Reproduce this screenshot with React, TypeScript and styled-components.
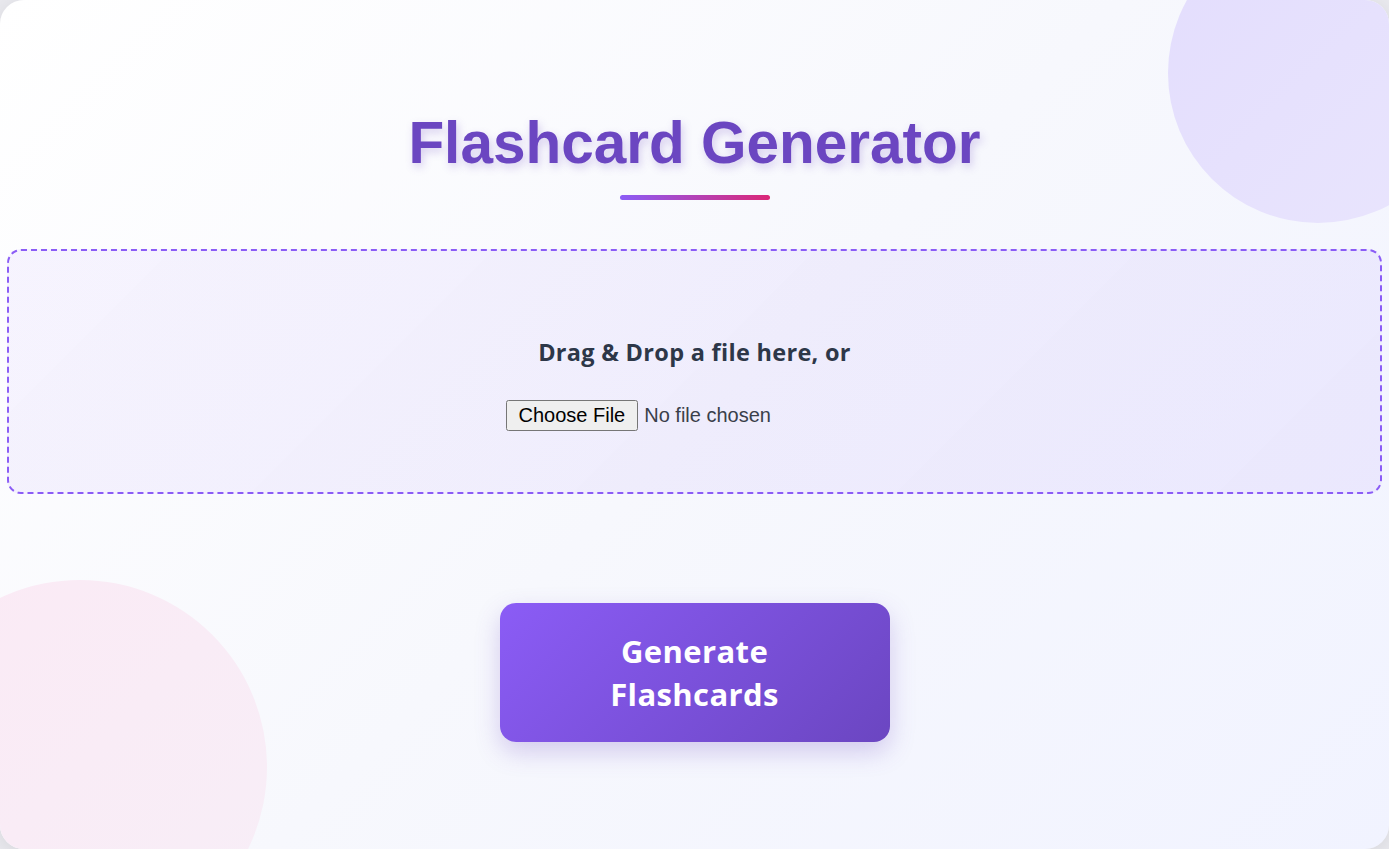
import React from "react";
import styled, { createGlobalStyle } from "styled-components";

const Global = createGlobalStyle`
  html, body { margin: 0; padding: 0; }
  body {
    background: #e9e9ee;
    font-family: "Open Sans", "Liberation Sans", sans-serif;
  }
  * { box-sizing: border-box; }
`;

const Card = styled.div`
  position: relative;
  overflow: hidden;
  min-height: 100vh;
  border-radius: 24px;
  background: linear-gradient(135deg, #ffffff 0%, #f7f8fd 50%, #f1f3ff 100%);
  box-shadow: 0 4px 20px rgba(0, 0, 0, 0.08);
  padding: 103px 7px 0;
  display: flex;
  flex-direction: column;
  align-items: center;
`;

const Blob = styled.div<{ $variant: "violet" | "pink" }>`
  position: absolute;
  border-radius: 50%;
  pointer-events: none;
  ${({ $variant }) =>
    $variant === "violet"
      ? `
    width: 300px; height: 300px; top: -77px; right: -79px;
    background: linear-gradient(135deg, #e3ddfd 0%, #e9e5fd 100%);
  `
      : `
    width: 374px; height: 374px; top: 580px; left: -107px;
    background: linear-gradient(135deg, #fbeaf5 0%, #f7eef7 100%);
  `}
`;

const Title = styled.h1`
  position: relative;
  margin: 0;
  font-family: "Liberation Sans", Arial, sans-serif;
  font-weight: 700;
  font-size: 58.5px;
  line-height: 80px;
  color: #6b46c1;
  text-shadow: 2px 4px 8px rgba(107, 70, 193, 0.25);
`;

const Underline = styled.div`
  position: relative;
  width: 150px;
  height: 5px;
  margin-top: 12px;
  border-radius: 3px;
  background: linear-gradient(90deg, #8b5cf6 0%, #db2777 100%);
`;

const DropZone = styled.div`
  position: relative;
  align-self: stretch;
  margin-top: 49px;
  height: 245px;
  border: 2px dashed #8b5cf6;
  border-radius: 14px;
  background: linear-gradient(135deg, rgba(139, 92, 246, 0.06) 0%, rgba(139, 92, 246, 0.08) 100%);
  display: flex;
  flex-direction: column;
  align-items: center;
  padding-top: 85px;
`;

const DropText = styled.p`
  margin: 0;
  font-family: "Open Sans", sans-serif;
  font-weight: 700;
  font-size: 23.5px;
  letter-spacing: 0.3px;
  line-height: 32px;
  color: #2d3748;
`;

const FileInput = styled.input`
  margin-top: 32px;
  font-family: "Liberation Sans", Arial, sans-serif;
  font-size: 20px;
  color: #3a3f4a;
  width: 378px;

  &::file-selector-button {
    font: inherit;
    padding: 2px 11px;
    margin-right: 6px;
  }
`;

const GenerateButton = styled.button`
  position: relative;
  margin-top: 109px;
  width: 390px;
  height: 139px;
  padding: 0 90px;
  border: none;
  border-radius: 16px;
  background: linear-gradient(135deg, #8b5cf6 0%, #6b46c1 100%);
  color: #ffffff;
  font-family: "Open Sans", sans-serif;
  font-weight: 700;
  font-size: 31px;
  letter-spacing: 0.4px;
  line-height: 43px;
  box-shadow: 0 10px 25px rgba(107, 70, 193, 0.25);
  cursor: pointer;
`;

export default function App() {
  return (
    <>
      <Global />
      <Card>
        <Blob $variant="violet" />
        <Blob $variant="pink" />
        <Title>Flashcard Generator</Title>
        <Underline />
        <DropZone>
          <DropText>Drag &amp; Drop a file here, or</DropText>
          <FileInput type="file" />
        </DropZone>
        <GenerateButton>Generate Flashcards</GenerateButton>
      </Card>
    </>
  );
}
